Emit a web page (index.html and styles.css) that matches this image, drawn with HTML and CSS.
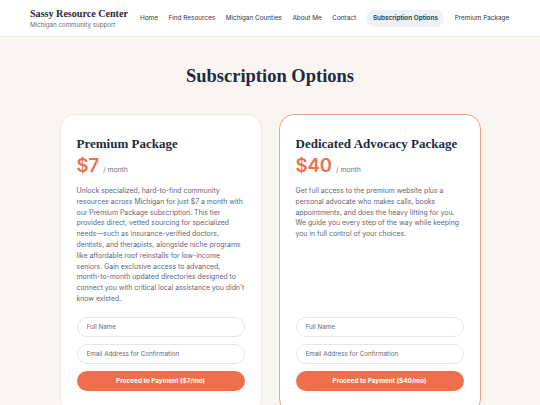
FILE: index.html
```html
<!DOCTYPE html>
<html>
<head>
<meta charset="utf-8">
<link rel="stylesheet" href="styles.css">
</head>
<body>
<header class="site-header">
  <div class="brand">
    <div class="brand-title">Sassy Resource Center</div>
    <div class="brand-sub">Michigan community support</div>
  </div>
  <nav class="nav">
    <a class="nav-item">Home</a>
    <a class="nav-item">Find Resources</a>
    <a class="nav-item">Michigan Counties</a>
    <a class="nav-item">About Me</a>
    <a class="nav-item">Contact</a>
    <a class="nav-item active">Subscription Options</a>
    <a class="nav-item">Premium Package</a>
  </nav>
</header>
<main class="main">
  <h1 class="page-title">Subscription Options</h1>
  <div class="plans">
    <section class="plan">
      <h2 class="plan-name">Premium Package</h2>
      <div class="price"><span class="amount">$7</span><span class="per">/ month</span></div>
      <p class="desc">Unlock specialized, hard-to-find community resources across Michigan for just $7 a month with our Premium Package subscription. This tier provides direct, vetted sourcing for specialized needs—such as insurance-verified doctors, dentists, and therapists, alongside niche programs like affordable roof reinstalls for low-income seniors. Gain exclusive access to advanced, month-to-month updated directories designed to connect you with critical local assistance you didn't know existed.</p>
      <form class="form">
        <input class="field" type="text" placeholder="Full Name">
        <input class="field" type="text" placeholder="Email Address for Confirmation">
        <button class="btn" type="button">Proceed to Payment ($7/mo)</button>
      </form>
    </section>
    <section class="plan featured">
      <h2 class="plan-name">Dedicated Advocacy Package</h2>
      <div class="price"><span class="amount">$40</span><span class="per">/ month</span></div>
      <p class="desc">Get full access to the premium website plus a personal advocate who makes calls, books appointments, and does the heavy lifting for you. We guide you every step of the way while keeping you in full control of your choices.</p>
      <form class="form">
        <input class="field" type="text" placeholder="Full Name">
        <input class="field" type="text" placeholder="Email Address for Confirmation">
        <button class="btn" type="button">Proceed to Payment ($40/mo)</button>
      </form>
    </section>
  </div>
</main>
</body>
</html>
```
FILE: styles.css
```css
* { box-sizing: border-box; }
html, body { margin: 0; padding: 0; }
body {
  background: #f9f6f2;
  font-family: Inter, "Liberation Sans", sans-serif;
  color: #1f2a3c;
  width: 540px;
  height: 405px;
  overflow: hidden;
}
.site-header {
  height: 37px;
  background: #ffffff;
  border-bottom: 1px solid #eeebe6;
  display: flex;
  align-items: center;
  justify-content: space-between;
  padding: 0 25.5px 0 30px;
}
.brand { display: flex; flex-direction: column; white-space: nowrap; padding-top: 1px; }
.brand-title {
  font-family: "Liberation Serif", serif;
  font-weight: 700;
  font-size: 10.1px;
  line-height: 12px;
  color: #1f2a3c;
}
.brand-sub {
  font-size: 6.2px;
  line-height: 9px;
  color: #5f6b7a;
}
.nav { display: flex; align-items: center; white-space: nowrap; }
.nav-item {
  font-size: 6.4px;
  color: #2c3646;
  padding: 4px 5.3px;
  border-radius: 9px;
  line-height: 9px;
}
.nav-item.active {
  background: #eef2f7;
  font-weight: 600;
  padding: 4px 6.5px;
  margin: 0 5px;
}
.main { padding-top: 28px; }
.page-title {
  margin: 0;
  text-align: center;
  font-family: "Liberation Serif", serif;
  font-weight: 700;
  font-size: 18.5px;
  line-height: 22px;
  color: #1f2a3c;
}
.plans {
  display: grid;
  grid-template-columns: 202px 202px;
  gap: 17px;
  justify-content: center;
  margin-top: 27px;
}
.plan {
  background: #ffffff;
  border: 1px solid #ece8e3;
  border-radius: 15px;
  padding: 20px 16px 14px 16px;
  display: flex;
  flex-direction: column;
  height: 300px;
}
.plan.featured { border: 1.5px solid #eea287; }
.plan-name {
  margin: 0;
  font-family: "Liberation Serif", serif;
  font-weight: 700;
  font-size: 13px;
  line-height: 17px;
  color: #1f2a3c;
  white-space: nowrap;
}
.price { display: flex; align-items: baseline; margin-top: 1px; }
.amount {
  font-size: 18.5px;
  line-height: 24px;
  font-weight: 600;
  color: #ee6f4e;
}
.per {
  font-size: 6.8px;
  color: #6b7280;
  margin-left: 4px;
}
.desc {
  margin: 9px 0 0 0;
  font-size: 6.9px;
  line-height: 10.8px;
  color: #5f6777;
  height: 124px;
}
.form {
  margin-top: 7px;
  display: flex;
  flex-direction: column;
  gap: 7px;
}
.field {
  height: 20px;
  border: 1px solid #e3e5ea;
  border-radius: 10px;
  padding: 0 9px;
  font-family: Inter, "Liberation Sans", sans-serif;
  font-size: 6.3px;
  color: #2c3646;
  background: #fff;
  outline: none;
}
.field::placeholder { color: #5f6777; }
.btn {
  height: 20px;
  border: none;
  border-radius: 10px;
  background: #ef6f4c;
  color: #ffffff;
  font-family: Inter, "Liberation Sans", sans-serif;
  font-weight: 700;
  font-size: 6.4px;
}
```
